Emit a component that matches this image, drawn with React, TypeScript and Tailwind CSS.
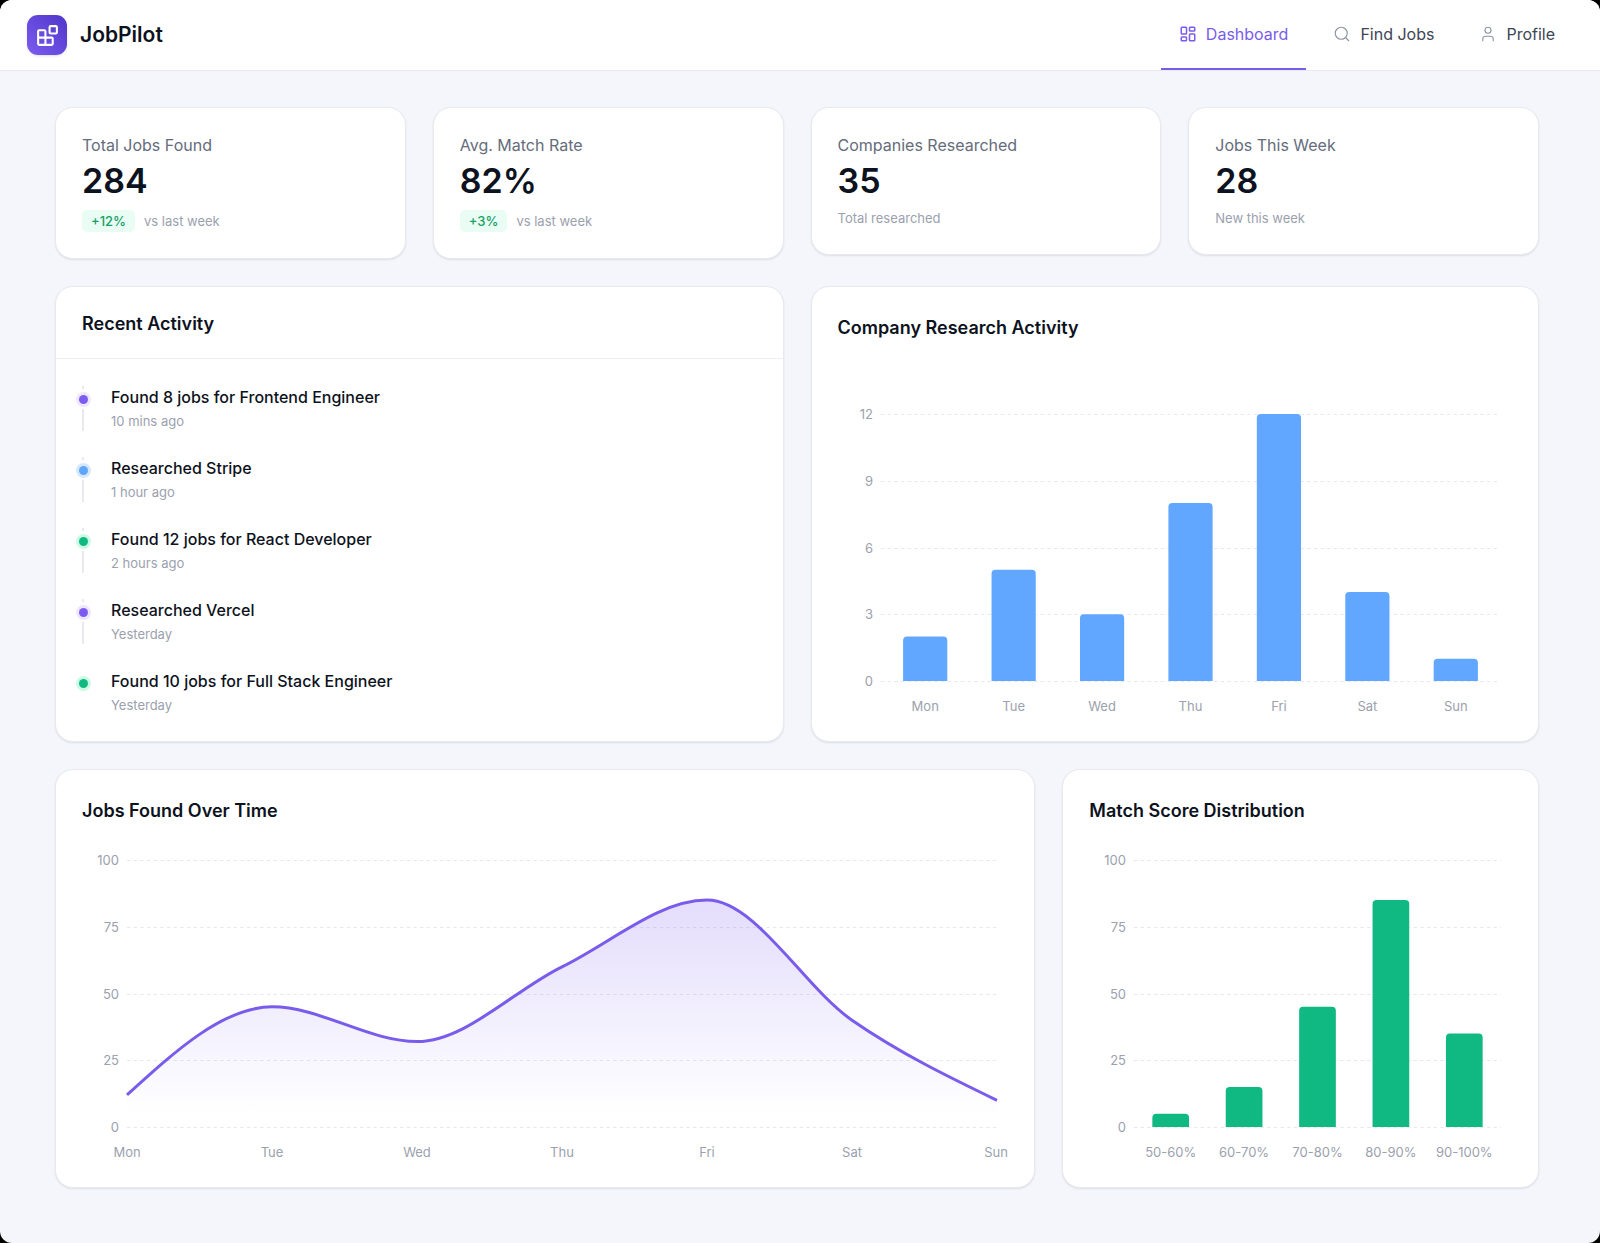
import { useLayoutEffect, useRef, useState } from "react";
import type { ReactNode } from "react";
import { LayoutDashboard, Search, User } from "lucide-react";
import { clsx } from "clsx";

const navItems = [
  { label: "Dashboard", icon: LayoutDashboard, active: true },
  { label: "Find Jobs", icon: Search, active: false },
  { label: "Profile", icon: User, active: false },
];

const stats = [
  { label: "Total Jobs Found", value: "284", change: "+12%", note: "vs last week" },
  { label: "Avg. Match Rate", value: "82%", change: "+3%", note: "vs last week" },
  { label: "Companies Researched", value: "35", note: "Total researched" },
  { label: "Jobs This Week", value: "28", note: "New this week" },
];

const activities = [
  { title: "Found 8 jobs for Frontend Engineer", time: "10 mins ago", type: "search" },
  { title: "Researched Stripe", time: "1 hour ago", type: "research" },
  { title: "Found 12 jobs for React Developer", time: "2 hours ago", type: "match" },
  { title: "Researched Vercel", time: "Yesterday", type: "search" },
  { title: "Found 10 jobs for Full Stack Engineer", time: "Yesterday", type: "match" },
];

const researchData = [
  { name: "Mon", value: 2 },
  { name: "Tue", value: 5 },
  { name: "Wed", value: 3 },
  { name: "Thu", value: 8 },
  { name: "Fri", value: 12 },
  { name: "Sat", value: 4 },
  { name: "Sun", value: 1 },
];

const jobsData = [
  { name: "Mon", value: 12 },
  { name: "Tue", value: 45 },
  { name: "Wed", value: 32 },
  { name: "Thu", value: 60 },
  { name: "Fri", value: 85 },
  { name: "Sat", value: 40 },
  { name: "Sun", value: 10 },
];

const scoreData = [
  { name: "50-60%", value: 5 },
  { name: "60-70%", value: 15 },
  { name: "70-80%", value: 45 },
  { name: "80-90%", value: 85 },
  { name: "90-100%", value: 35 },
];

type Point = { name: string; value: number };
type Margin = { left: number; right: number };

// Chart geometry shared by all three charts
const CHART_HEIGHT = 306;
const PLOT = { top: 5, height: 267 };
const PLOT_BOTTOM = PLOT.top + PLOT.height;
const DEFAULT_MARGIN: Margin = { left: 45, right: 11 };

// Helper function to get the dot colors of an activity
function getActivityColor(type: string) {
  switch (type) {
    case "search":
      return "bg-[#7c5cf0] ring-[#efe7fe]";
    case "research":
      return "bg-[#60a5fa] ring-[#d6e8fe]";
    default:
      return "bg-[#10b981] ring-[#cdfae4]";
  }
}

function Card({ className, children }: { className?: string; children: ReactNode }) {
  return (
    <section
      className={clsx(
        "rounded-[18px] border border-[#e8eaf0] bg-white shadow-[0_1px_2px_rgba(15,23,42,0.10)]",
        className
      )}
    >
      {children}
    </section>
  );
}

function StatCard({ stat }: { stat: (typeof stats)[number] }) {
  return (
    <Card className="p-[26px]">
      <p className="text-base leading-[23px] text-[#656c7b]">{stat.label}</p>
      <p className="mt-1 text-[34px] leading-10 font-semibold text-[#0d1220]">
        {stat.value}
      </p>
      {stat.change ? (
        <div className="mt-[9px] flex items-center gap-[9px] text-[13px] leading-[22px]">
          <span className="rounded-[5px] bg-[#e9fdf4] px-[9px] font-medium text-[#16a065]">
            {stat.change}
          </span>
          <span className="text-[#9ba1ae]">{stat.note}</span>
        </div>
      ) : (
        <p className="mt-[7px] text-[13px] leading-5 text-[#9ba1ae]">{stat.note}</p>
      )}
    </Card>
  );
}

// Keeps the width of the chart's container, so that the svg can be drawn 1:1
function useWidth() {
  const ref = useRef<HTMLDivElement>(null);
  const [width, setWidth] = useState(0);

  useLayoutEffect(() => {
    const el = ref.current;
    if (!el) return;
    setWidth(el.clientWidth);
    const observer = new ResizeObserver(() => setWidth(el.clientWidth));
    observer.observe(el);
    return () => observer.disconnect();
  }, []);

  return { ref, width };
}

function Grid({ width, ticks, margin }: { width: number; ticks: number[]; margin: Margin }) {
  const max = ticks[ticks.length - 1];
  return (
    <g>
      {ticks.map((tick) => {
        const y = PLOT_BOTTOM - (tick / max) * PLOT.height;
        return (
          <g key={tick}>
            <line
              x1={margin.left}
              x2={width - margin.right}
              y1={Math.round(y) + 0.5}
              y2={Math.round(y) + 0.5}
              stroke="#e6e8ed"
              strokeDasharray="3.33 3.33"
            />
            <text x={margin.left - 8} y={y + 5} textAnchor="end">
              {tick}
            </text>
          </g>
        );
      })}
    </g>
  );
}

function BarChart({
  data,
  ticks,
  color,
  label,
  margin = DEFAULT_MARGIN,
}: {
  data: Point[];
  ticks: number[];
  color: string;
  label: string;
  margin?: Margin;
}) {
  const { ref, width } = useWidth();
  const max = ticks[ticks.length - 1];
  const band = (width - margin.left - margin.right) / data.length;
  const barWidth = band / 2;

  return (
    <div ref={ref} className="min-w-0">
      {width > 0 && (
        <svg
          width={width}
          height={CHART_HEIGHT}
          role="img"
          aria-label={label}
          className="block overflow-visible fill-[#9ba1ae] text-[13px]"
        >
          <Grid width={width} ticks={ticks} margin={margin} />
          {data.map((d, i) => {
            const center = margin.left + band * (i + 0.5);
            const height = (d.value / max) * PLOT.height;
            const x = center - barWidth / 2;
            const y = PLOT_BOTTOM - height;
            return (
              <g key={d.name}>
                <path
                  fill={color}
                  d={`M${x},${PLOT_BOTTOM}V${y + 4}q0,-4 4,-4H${x + barWidth - 4}q4,0 4,4V${PLOT_BOTTOM}Z`}
                />
                <text x={center} y={PLOT_BOTTOM + 30} textAnchor="middle">
                  {d.name}
                </text>
              </g>
            );
          })}
        </svg>
      )}
    </div>
  );
}

// Monotone cubic curve through evenly spaced points
function monotonePath(points: { x: number; y: number }[]) {
  const n = points.length;
  const h = points[1].x - points[0].x;
  const slopes = points.slice(1).map((p, i) => (p.y - points[i].y) / h);
  const tangents = points.map((_, i) => {
    if (i === 0 || i === n - 1) return 0;
    const a = slopes[i - 1];
    const b = slopes[i];
    if (a * b <= 0) return 0;
    return Math.sign(a) * 2 * Math.min(Math.abs(a), Math.abs(b), Math.abs(a + b) / 4);
  });
  tangents[0] = (3 * slopes[0] - tangents[1]) / 2;
  tangents[n - 1] = (3 * slopes[n - 2] - tangents[n - 2]) / 2;

  return points.slice(1).reduce((path, p, i) => {
    const prev = points[i];
    const dx = h / 3;
    return `${path}C${prev.x + dx},${prev.y + dx * tangents[i]} ${p.x - dx},${p.y - dx * tangents[i + 1]} ${p.x},${p.y}`;
  }, `M${points[0].x},${points[0].y}`);
}

function AreaChart({ data, ticks, label }: { data: Point[]; ticks: number[]; label: string }) {
  const { ref, width } = useWidth();
  const margin = DEFAULT_MARGIN;
  const max = ticks[ticks.length - 1];
  const step = (width - margin.left - margin.right) / (data.length - 1);
  const points = data.map((d, i) => ({
    x: margin.left + step * i,
    y: PLOT_BOTTOM - (d.value / max) * PLOT.height,
  }));
  const line = monotonePath(points);

  return (
    <div ref={ref} className="min-w-0">
      {width > 0 && (
        <svg
          width={width}
          height={CHART_HEIGHT}
          role="img"
          aria-label={label}
          className="block overflow-visible fill-[#9ba1ae] text-[13px]"
        >
          <defs>
            <linearGradient id="jobsFill" x1="0" y1="0" x2="0" y2="1">
              <stop offset="5%" stopColor="#7c5cf0" stopOpacity="0.2" />
              <stop offset="95%" stopColor="#7c5cf0" stopOpacity="0" />
            </linearGradient>
          </defs>
          <Grid width={width} ticks={ticks} margin={margin} />
          <path d={`${line}V${PLOT_BOTTOM}H${margin.left}Z`} fill="url(#jobsFill)" />
          <path d={line} fill="none" stroke="#795ceb" strokeWidth={3} />
          {data.map((d, i) => (
            // the last label is kept inside the svg
            <text
              key={d.name}
              x={i === data.length - 1 ? width : points[i].x}
              y={PLOT_BOTTOM + 30}
              textAnchor={i === data.length - 1 ? "end" : "middle"}
            >
              {d.name}
            </text>
          ))}
        </svg>
      )}
    </div>
  );
}

function ChartCard({
  title,
  className,
  children,
}: {
  title: string;
  className?: string;
  children: ReactNode;
}) {
  return (
    <Card
      className={clsx(
        "flex min-w-0 flex-col justify-between gap-[30px] px-[26px] pt-[27px] pb-[26px]",
        className
      )}
    >
      <h2 className="text-lg leading-7 font-semibold text-[#0d1220]">{title}</h2>
      {children}
    </Card>
  );
}

function RecentActivity() {
  return (
    <Card>
      <h2 className="border-b border-[#eceef2] px-[26px] pt-[23px] pb-5 text-lg leading-7 font-semibold text-[#0d1220]">
        Recent Activity
      </h2>
      <ul className="flex flex-col gap-[26px] px-[26px] pt-[27px] pb-[26px]">
        {activities.map((activity, i) => (
          <li
            key={activity.title}
            className={clsx(
              "relative border-l-2 pl-[27px]",
              i < activities.length - 1 ? "border-[#e8eaef]" : "border-transparent"
            )}
          >
            <span className="absolute top-[3px] -left-[11px] grid size-5 place-items-center rounded-full bg-white">
              <span
                className={clsx(
                  "size-[9px] rounded-full ring-3",
                  getActivityColor(activity.type)
                )}
              />
            </span>
            <p className="text-base leading-[23px] font-medium text-[#0d1220]">
              {activity.title}
            </p>
            <p className="mt-0.5 text-[13px] leading-5 text-[#9ba1ae]">{activity.time}</p>
          </li>
        ))}
      </ul>
    </Card>
  );
}

function LogoIcon() {
  return (
    <svg
      viewBox="0 0 24 24"
      fill="none"
      stroke="currentColor"
      strokeWidth={2}
      strokeLinecap="round"
      strokeLinejoin="round"
      aria-hidden="true"
      className="size-[25px] text-white"
    >
      <rect width="7" height="7" x="14" y="3" rx="1" />
      <path d="M10 21V8a1 1 0 0 0-1-1H4a1 1 0 0 0-1 1v12a1 1 0 0 0 1 1h12a1 1 0 0 0 1-1v-5a1 1 0 0 0-1-1H3" />
    </svg>
  );
}

function Header() {
  return (
    <header className="flex items-center justify-between border-b border-[#e8eaee] bg-white px-[27px]">
      <a href="#" className="flex items-center gap-[13px]">
        <span className="grid size-10 place-items-center rounded-[11px] bg-linear-to-tr from-[#7c5cf0] to-[#4f35c8] shadow-sm">
          <LogoIcon />
        </span>
        <span className="text-[21px] font-semibold text-[#0d1220]">JobPilot</span>
      </a>
      <nav className="flex gap-[9px]">
        {navItems.map(({ label, icon: Icon, active }) => (
          <a
            key={label}
            href="#"
            className={clsx(
              "flex h-[70px] items-center gap-[9px] border-b-2 px-[18px] text-base",
              active
                ? "border-[#795ceb] text-[#795ceb]"
                : "border-transparent text-[#3d4554]"
            )}
          >
            <Icon
              className={clsx("size-[18px]", !active && "text-[#8d93a1]")}
              strokeWidth={active ? 2 : 1.5}
            />
            {label}
          </a>
        ))}
      </nav>
    </header>
  );
}

export default function App() {
  return (
    <div className="min-h-screen bg-black font-['Inter',sans-serif]">
      <div className="min-h-screen overflow-hidden rounded-xl bg-[#f5f6fb]">
        <Header />
        <main className="flex flex-col gap-[27px] pt-9 pr-[61px] pb-[55px] pl-[55px]">
          <div className="grid grid-cols-4 items-start gap-[27px]">
            {stats.map((stat) => (
              <StatCard key={stat.label} stat={stat} />
            ))}
          </div>
          <div className="grid grid-cols-2 gap-[27px]">
            <RecentActivity />
            <ChartCard title="Company Research Activity">
              <BarChart
                data={researchData}
                ticks={[0, 3, 6, 9, 12]}
                color="#61a7ff"
                label="Company research activity per day"
                margin={{ left: 43, right: 13 }}
              />
            </ChartCard>
          </div>
          <div className="grid grid-cols-3 gap-[27px]">
            <ChartCard title="Jobs Found Over Time" className="col-span-2">
              <AreaChart
                data={jobsData}
                ticks={[0, 25, 50, 75, 100]}
                label="Jobs found per day"
              />
            </ChartCard>
            <ChartCard title="Match Score Distribution">
              <BarChart
                data={scoreData}
                ticks={[0, 25, 50, 75, 100]}
                color="#10b981"
                label="Jobs by match score"
              />
            </ChartCard>
          </div>
        </main>
      </div>
    </div>
  );
}
